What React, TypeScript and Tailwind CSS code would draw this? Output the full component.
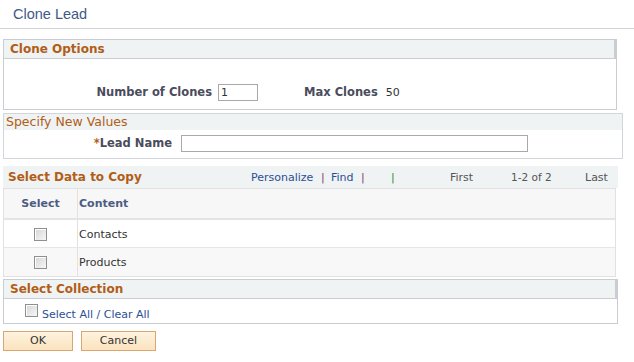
import React from "react";

const Check = () => (
  <span className="inline-block w-[13px] h-[13px] border border-[#8e8f8f] bg-gradient-to-br from-[#d5d5d5] to-[#f7f7f7] shadow-[inset_1px_1px_0_#fff]" />
);

export default function App() {
  return (
    <div className="w-[634px] h-[362px] bg-white text-[11px] text-[#333] font-['DejaVu_Sans',sans-serif] overflow-hidden">
      <div className="h-[29px] border-b border-[#d0d3d8] flex items-center pl-[13px] pt-[2px]">
        <span className="font-['Liberation_Sans',Arial,sans-serif] text-[14.5px] text-[#3f5a86]">Clone Lead</span>
      </div>
      <div className="pl-[3px] pt-[10px] flex flex-col">
        {/* Clone Options */}
        <div className="w-[614px] h-[71px] border border-[#c9cdd2] flex flex-col">
          <div className="h-[19px] bg-[#eff3f4] border-b border-r-2 border-[#c9cdd2] flex items-center pl-[6px]">
            <span className="font-bold text-[12px] text-[#b25d16]">Clone Options</span>
          </div>
          <div className="flex items-center pt-[24px]">
            <span className="w-[208px] text-right font-bold text-[11.5px] text-[#4a4c5c]">Number of Clones</span>
            <span className="ml-[6px] w-[40px] h-[17px] border border-[#a9a9a9] text-[11px] leading-[15px] pl-[2px] text-[#333]">1</span>
            <span className="ml-[46px] font-bold text-[11.5px] text-[#4a4c5c]">Max Clones</span>
            <span className="ml-[8px] text-[#333] pt-[2px]">50</span>
          </div>
        </div>
        {/* Specify New Values */}
        <div className="mt-[3px] w-[620px] h-[46px] border border-[#d2d5d9] flex flex-col">
          <div className="h-[16px] bg-[#eff3f4] flex items-center pl-[2px]">
            <span className="text-[12.5px] text-[#b25d16]">Specify New Values</span>
          </div>
          <div className="flex items-center pt-[5px]">
            <span className="w-[168px] text-right font-bold text-[11.5px] text-[#4a4c5c]">
              <span className="text-[#b25d16]">*</span>Lead Name
            </span>
            <span className="ml-[9px] w-[347px] h-[17px] border border-[#a9a9a9]" />
          </div>
        </div>
        {/* Select Data to Copy */}
        <div className="mt-[7px] w-[615px] h-[22px] bg-[#eff3f4] flex items-center relative">
          <span className="pl-[5px] font-bold text-[12px] text-[#b25d16]">Select Data to Copy</span>
          <span className="absolute left-[248px] top-[4px] text-[#2c4f94]">Personalize</span>
          <span className="absolute left-[318px] top-[4px] text-[#7b3f6a]">|</span>
          <span className="absolute left-[328px] top-[4px] text-[#2c4f94]">Find</span>
          <span className="absolute left-[358px] top-[4px] text-[#7b3f6a]">|</span>
          <span className="absolute left-[388px] top-[4px] text-[#2f8a2f]">|</span>
          <span className="absolute left-[447px] top-[4px] text-[#555]">First</span>
          <span className="absolute left-[508px] top-[4px] text-[#555] text-[10.5px]">1-2 of 2</span>
          <span className="absolute left-[582px] top-[4px] text-[#555]">Last</span>
        </div>
        <div className="w-[613px] border border-[#e1e1e1] flex flex-col">
          <div className="h-[31px] bg-[#f7f7f7] border-b-2 border-[#e4e4e4] flex">
            <div className="w-[74px] border-r border-[#e1e1e1] flex items-center justify-center pt-[2px] font-bold text-[#4d5d82]">Select</div>
            <div className="flex items-center pl-[1px] pt-[2px] font-bold text-[#4d5d82]">Content</div>
          </div>
          <div className="h-[28px] bg-white border-b border-[#e6e6e6] flex">
            <div className="w-[74px] border-r border-[#e1e1e1] flex items-center justify-center pt-[2px]"><Check /></div>
            <div className="flex items-center pl-[1px] pt-[4px]">Contacts</div>
          </div>
          <div className="h-[28px] bg-[#f8f8f8] flex">
            <div className="w-[74px] border-r border-[#e1e1e1] flex items-center justify-center pt-[1px]"><Check /></div>
            <div className="flex items-center pl-[1px] pt-[3px]">Products</div>
          </div>
        </div>
        {/* Select Collection */}
        <div className="mt-[2px] w-[615px] h-[45px] border border-[#c9cdd2] flex flex-col">
          <div className="h-[19px] bg-[#eff3f4] border-b border-r-2 border-[#c9cdd2] flex items-center pl-[6px]">
            <span className="font-bold text-[12px] text-[#b25d16]">Select Collection</span>
          </div>
          <div className="flex items-start pl-[21px] pt-[5px]">
            <Check />
            <span className="ml-[4px] mt-[3px] text-[#2c4f94]">Select All / Clear All</span>
          </div>
        </div>
        {/* Buttons */}
        <div className="mt-[7px] flex gap-[8px]">
          <button className="w-[70px] h-[20px] border border-[#d8a673] bg-gradient-to-b from-[#fdf3df] to-[#fbe3bd] text-[11px] text-[#333]">OK</button>
          <button className="w-[75px] h-[20px] border border-[#d8a673] bg-gradient-to-b from-[#fdf3df] to-[#fbe3bd] text-[11px] text-[#333]">Cancel</button>
        </div>
      </div>
    </div>
  );
}
